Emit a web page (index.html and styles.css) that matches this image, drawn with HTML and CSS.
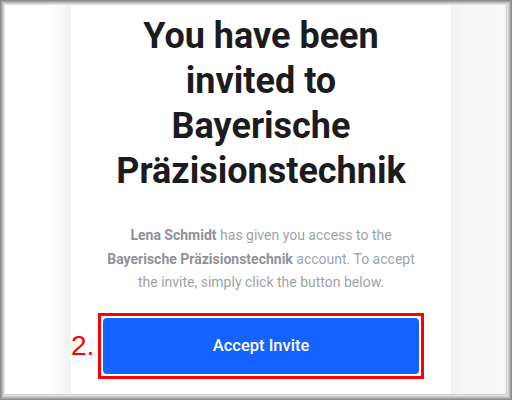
FILE: index.html
```html
<!DOCTYPE html>
<html>
<head>
<meta charset="utf-8">
<link rel="stylesheet" href="styles.css">
</head>
<body>
<div class="frame">
  <div class="card">
    <h1 class="title">You have been invited to Bayerische Präzisionstechnik</h1>
    <p class="lead"><strong>Lena Schmidt</strong> has given you access to the <strong>Bayerische Präzisionstechnik</strong> account. To accept the invite, simply click the button below.</p>
    <div class="action">
      <span class="marker">2.</span>
      <div class="highlight">
        <a class="btn" href="#">Accept Invite</a>
      </div>
    </div>
  </div>
</div>
</body>
</html>
```
FILE: styles.css
```css
html, body {
  margin: 0;
  padding: 0;
  background: #fff;
}
.frame {
  position: relative;
  width: 512px;
  height: 400px;
  overflow: hidden;
  box-sizing: border-box;
  padding-left: 71px;
  background: linear-gradient(to right, #fff 0, #fff 48px, #f2f2f2 71px, #f2f2f2 451px, #f7f7f7 464px, #f8f8f8 512px);
}
.frame::after {
  content: "";
  position: absolute;
  inset: 0;
  pointer-events: none;
  box-shadow:
    inset 0 0 0 1px #8c8c8c,
    inset 0 0 0 2px #a2a2a2,
    inset 0 0 0 3px #b9b9b9,
    inset 0 0 0 4px #cfcfcf,
    inset 0 0 0 5px #e3e3e3,
    inset -1px -1px 0 5px #d0d0d0;
}
.card {
  width: 380px;
  height: 400px;
  background: #fff;
  display: flex;
  flex-direction: column;
  align-items: center;
  font-family: Roboto, "Liberation Sans", sans-serif;
}
.title {
  margin: 0;
  padding-top: 14px;
  width: 310px;
  text-align: center;
  font-size: 36px;
  line-height: 45px;
  font-weight: 700;
  color: #1c1c20;
}
.lead {
  margin: 30px 0 0;
  width: 320px;
  text-align: center;
  font-size: 14px;
  line-height: 23.5px;
  color: #a0a2a8;
}
.lead strong {
  color: #909299;
  font-weight: 700;
}
.action {
  position: relative;
  margin-top: 18px;
}
.highlight {
  border: 3px solid #ff0000;
  padding: 2px;
}
.btn {
  display: flex;
  align-items: center;
  justify-content: center;
  width: 316px;
  height: 56px;
  background: #1463ff;
  color: #fff;
  border-radius: 4px;
  text-decoration: none;
  font-size: 16.5px;
  font-weight: 500;
}
.marker {
  position: absolute;
  left: -27px;
  top: 17px;
  font-family: "Liberation Sans", Arial, sans-serif;
  font-size: 28px;
  line-height: 32px;
  color: #ff0000;
}
```
